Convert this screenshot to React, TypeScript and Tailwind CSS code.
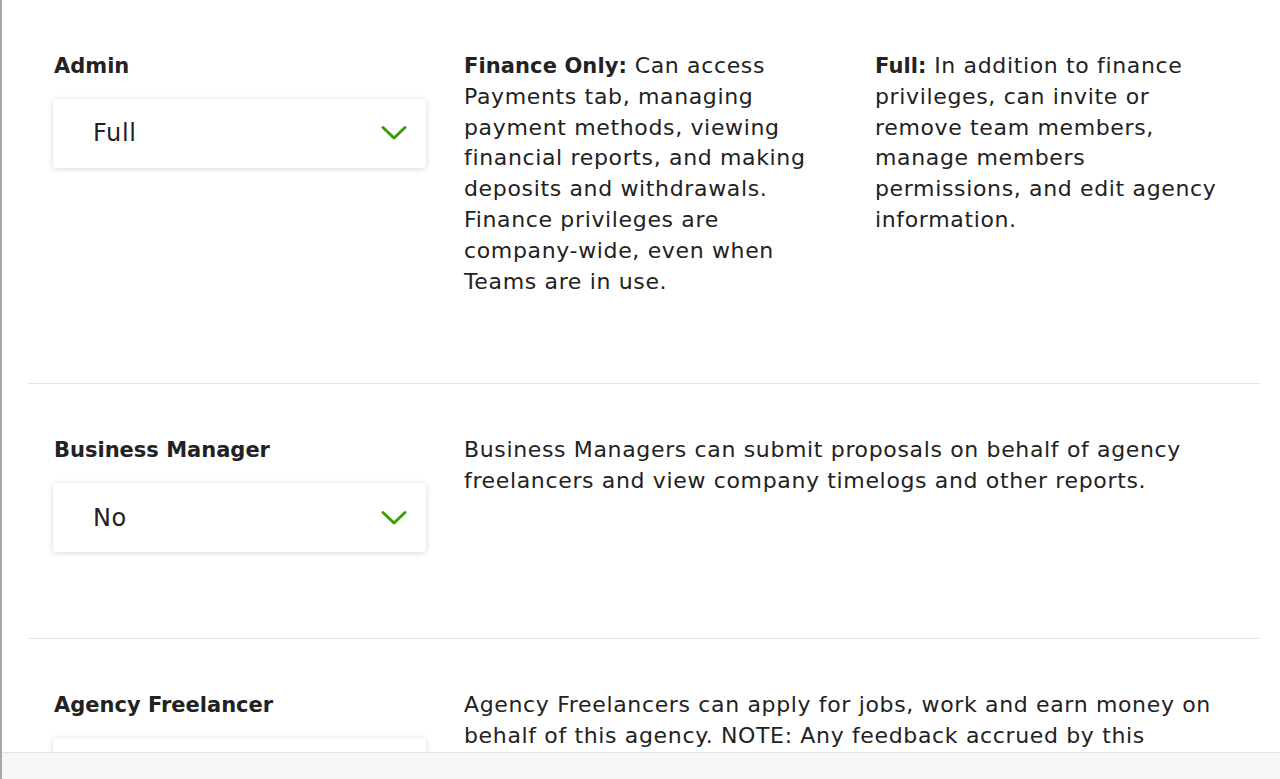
import React from "react";

const font = { fontFamily: '"DejaVu Sans", "Liberation Sans", sans-serif' };

function Chevron() {
  return (
    <svg width="26" height="16" viewBox="0 0 26 16" fill="none">
      <path d="M2 2.5 L13 13 L24 2.5" stroke="#37a000" strokeWidth="3" strokeLinecap="round" strokeLinejoin="round" />
    </svg>
  );
}

function Select({ value }: { value: string }) {
  return (
    <div className="mt-[17px] h-[69px] w-[373px] rounded-[4px] bg-white shadow-[0_1px_6px_rgba(0,0,0,0.16)] flex items-center justify-between pl-[40px] pr-[19px]">
      <span className="text-[24px] tracking-[0.6px] text-[#222] pt-[1px]">{value}</span>
      <Chevron />
    </div>
  );
}

function Lines({ lines }: { lines: React.ReactNode[] }) {
  return (
    <div className="text-[22px] tracking-[0.65px]">
      {lines.map((l, i) => (
        <div key={i} className="whitespace-nowrap">
          {l}
        </div>
      ))}
    </div>
  );
}

function B({ children }: { children: React.ReactNode }) {
  return <span className="font-bold text-[21px] tracking-[0.1px]">{children}</span>;
}

function Section({
  label,
  value,
  children,
  last,
}: {
  label: string;
  value: string;
  children: React.ReactNode;
  last?: boolean;
}) {
  return (
    <div className={`pt-[51px] pb-[86px] pl-[25px] pr-[26px] ${last ? "" : "border-b border-[#e2e2e2]"}`}>
      <div className="grid grid-cols-[373px_373px_1fr] gap-x-[38px] text-[20px] leading-[30.8px] text-[#222]">
        <div>
          <div className="font-bold text-[21px] pl-[1px]">{label}</div>
          <Select value={value} />
        </div>
        {children}
      </div>
    </div>
  );
}

export default function App() {
  return (
    <div className="relative h-[779px] w-[1280px] overflow-hidden bg-white border-l-2 border-[#a8a8a8]" style={font}>
      <div className="ml-[26px] mr-[21px]">
        <Section label="Admin" value="Full">
          <Lines
            lines={[
              <>
                <B>Finance Only:</B> Can access
              </>,
              "Payments tab, managing",
              "payment methods, viewing",
              "financial reports, and making",
              "deposits and withdrawals.",
              "Finance privileges are",
              "company-wide, even when",
              "Teams are in use.",
            ]}
          />
          <Lines
            lines={[
              <>
                <B>Full:</B> In addition to finance
              </>,
              "privileges, can invite or",
              "remove team members,",
              "manage members",
              "permissions, and edit agency",
              "information.",
            ]}
          />
        </Section>
        <Section label="Business Manager" value="No">
          <div className="col-span-2">
            <Lines
              lines={[
                "Business Managers can submit proposals on behalf of agency",
                "freelancers and view company timelogs and other reports.",
              ]}
            />
          </div>
        </Section>
        <Section label="Agency Freelancer" value="Yes" last>
          <div className="col-span-2">
            <Lines
              lines={[
                "Agency Freelancers can apply for jobs, work and earn money on",
                "behalf of this agency. NOTE: Any feedback accrued by this",
                "freelancer will be visible on the agency profile.",
              ]}
            />
          </div>
        </Section>
      </div>
      <div className="absolute left-0 right-0 bottom-0 h-[27px] bg-[#f7f7f8] border-t border-[#e4e4e4]" />
    </div>
  );
}
